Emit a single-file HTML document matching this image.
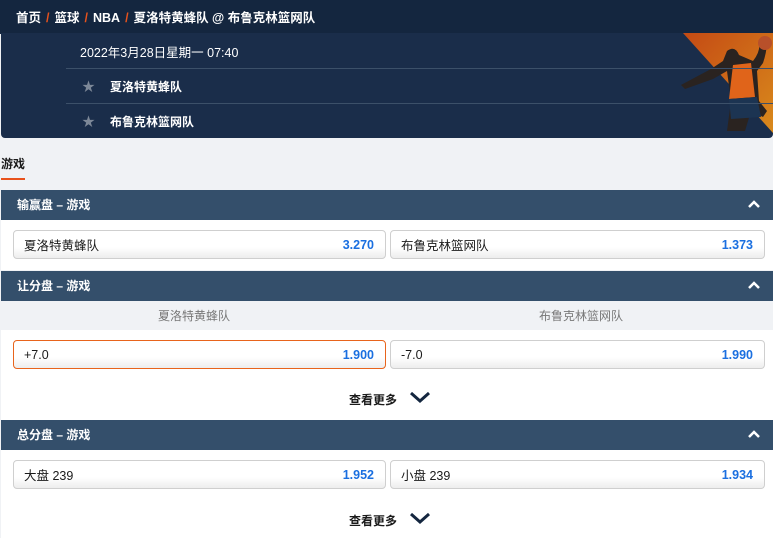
<!DOCTYPE html>
<html><head><meta charset="utf-8"><style>
*{margin:0;padding:0;box-sizing:border-box}
body{width:773px;height:538px;overflow:hidden;background:#f0f2f5;font-family:"Liberation Sans","Noto Sans CJK SC",sans-serif;font-size:12px;color:#1a1a1a;position:relative}
.abs{position:absolute}
.crumb{left:0;top:0;width:773px;height:34px;background:#14263f;color:#fff;font-weight:bold;font-size:12.5px;padding:7px 0 0 16px}
.crumb i{color:#e8521c;font-style:normal;margin:0 5px}
.info{left:1px;top:33px;width:772px;height:105px;background:#1a2d4a;border-radius:0 0 4px 4px;overflow:hidden}
.line{left:66px;height:1px;width:707px;background:#3c5069}
.w{color:#fff}
.hdr{left:1px;width:772px;height:30px;background:#344f6b;color:#fff;font-weight:bold;font-size:12px;padding:6px 0 0 16px}
.hdr svg{position:absolute;right:12px;top:10px}
.row{left:1px;width:772px;background:#fff}
.btn{position:absolute;height:29px;border:1px solid #cfcfcf;border-radius:4px;background:linear-gradient(#fff 60%,#ededed);padding:0 11px 0 10px;font-size:12.5px;display:flex;align-items:center;justify-content:space-between}
.btn b{color:#1a6fe0;font-size:12.5px}
.more{position:absolute;left:348px;font-size:12px;font-weight:bold}
.more svg{position:absolute;left:60px;top:-1px}
.star{color:#7d8898;font-size:13px}
</style></head><body>
<div class="abs crumb">首页<i>/</i>篮球<i>/</i>NBA<i>/</i>夏洛特黄蜂队 @ 布鲁克林篮网队</div>
<div class="abs info">
 <svg class="abs" style="left:0;top:0" width="772" height="105">
  <defs><linearGradient id="g" x1="0" y1="0" x2="1" y2="1"><stop offset="0" stop-color="#c44a14"/><stop offset="1" stop-color="#d98a1c"/></linearGradient></defs>
  <polygon points="682,0 772,0 772,100" fill="url(#g)"/>
  <path d="M726,18 q8,-6 12,4 l14,6 q8,-10 6,-20 l6,-4 q4,8 -2,26 l-6,8 l2,30 l8,10 l-4,6 l-12,-6 l-6,20 l-18,0 l4,-30 l-4,-30 l-14,8 l-28,10 l-4,-4 l30,-16 l12,-8 z" fill="#2a2320"/>
  <path d="M732,32 l18,-2 l4,34 l-26,2 z" fill="#e0641a"/>
  <path d="M728,66 l28,-2 l4,20 l-30,2 z" fill="#1c3452"/>
  <circle cx="764" cy="10" r="7" fill="#b8502a"/>
 </svg>
 <div class="abs w" style="left:79px;top:9px;font-size:12.5px">2022年3月28日星期一 07:40</div>
 <div class="abs line" style="top:35px;left:65px"></div>
 <div class="abs line" style="top:70px;left:65px"></div>
 <div class="abs star" style="left:81px;top:43px">★</div>
 <div class="abs w" style="left:109px;top:45px;font-weight:bold">夏洛特黄蜂队</div>
 <div class="abs star" style="left:81px;top:78px">★</div>
 <div class="abs w" style="left:109px;top:80px;font-weight:bold">布鲁克林篮网队</div>
</div>
<div class="abs" style="left:1px;top:155px;font-weight:bold">游戏</div>
<div class="abs" style="left:1px;top:178px;width:24px;height:2px;background:#e8521c"></div>

<div class="abs hdr" style="top:190px">输赢盘 – 游戏<svg width="14" height="9"><path d="M2,7 L7,2 L12,7" stroke="#fff" stroke-width="2.5" fill="none"/></svg></div>
<div class="abs row" style="top:220px;height:50px">
 <div class="btn" style="left:12px;top:10px;width:373px"><span>夏洛特黄蜂队</span><b>3.270</b></div>
 <div class="btn" style="left:389px;top:10px;width:375px"><span>布鲁克林篮网队</span><b>1.373</b></div>
</div>
<div class="abs hdr" style="top:271px">让分盘 – 游戏<svg width="14" height="9"><path d="M2,7 L7,2 L12,7" stroke="#fff" stroke-width="2.5" fill="none"/></svg></div>
<div class="abs" style="left:1px;top:301px;width:772px;height:29px;background:#f0f2f5;color:#777">
 <span class="abs" style="left:157px;top:6px">夏洛特黄蜂队</span>
 <span class="abs" style="left:538px;top:6px">布鲁克林篮网队</span>
</div>
<div class="abs row" style="top:330px;height:90px">
 <div class="btn" style="left:12px;top:10px;width:373px;border-color:#e8641c"><span>+7.0</span><b>1.900</b></div>
 <div class="btn" style="left:389px;top:10px;width:375px"><span>-7.0</span><b>1.990</b></div>
 <div class="more" style="top:61px">查看更多<svg width="22" height="14"><path d="M2,3 L11,11 L20,3" stroke="#14263f" stroke-width="3" fill="none"/></svg></div>
</div>
<div class="abs hdr" style="top:420px">总分盘 – 游戏<svg width="14" height="9"><path d="M2,7 L7,2 L12,7" stroke="#fff" stroke-width="2.5" fill="none"/></svg></div>
<div class="abs row" style="top:450px;height:88px">
 <div class="btn" style="left:12px;top:10px;width:373px"><span>大盘 239</span><b>1.952</b></div>
 <div class="btn" style="left:389px;top:10px;width:375px"><span>小盘 239</span><b>1.934</b></div>
 <div class="more" style="top:62px">查看更多<svg width="22" height="14"><path d="M2,3 L11,11 L20,3" stroke="#14263f" stroke-width="3" fill="none"/></svg></div>
</div>
</body></html>
